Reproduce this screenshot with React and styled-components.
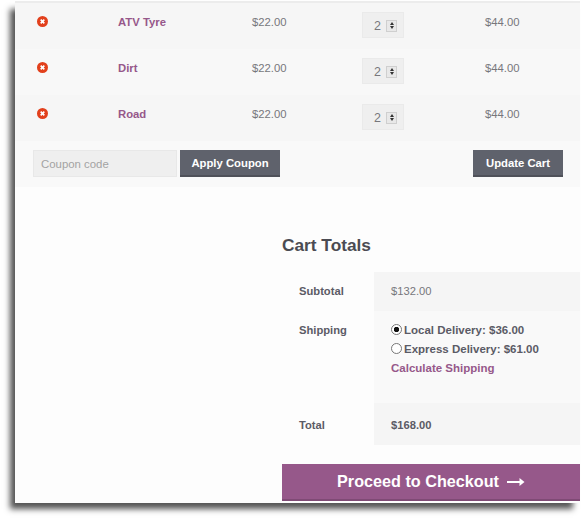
import React from 'react';
import styled, {createGlobalStyle} from 'styled-components';

const items = ['ATV Tyre', 'Dirt', 'Road'];

function App() {
    return (
        <Page>
            <GlobalStyle/>
            <Panel>
                <CartTable>
                    {items.map((name) => (
                        <CartRow key={name}>
                            <RemoveCell><RemoveIcon/></RemoveCell>
                            <NameLink>{name}</NameLink>
                            <Price>$22.00</Price>
                            <QtyCell>
                                <QtyBox>
                                    <QtyValue>2</QtyValue>
                                    <Spinner>
                                        <SpinUp/>
                                        <SpinDown/>
                                    </Spinner>
                                </QtyBox>
                            </QtyCell>
                            <Price>$44.00</Price>
                        </CartRow>
                    ))}
                </CartTable>
                <Actions>
                    <CouponInput placeholder="Coupon code"/>
                    <DarkButton>Apply Coupon</DarkButton>
                    <UpdateButton>Update Cart</UpdateButton>
                </Actions>
                <Totals>
                    <TotalsTitle>Cart Totals</TotalsTitle>
                    <TotalsTable>
                        <TotalsLabel>Subtotal</TotalsLabel>
                        <SubtotalValue>$132.00</SubtotalValue>
                        <TotalsLabel>Shipping</TotalsLabel>
                        <ShippingValue>
                            <ShipOption><Radio $checked/>Local Delivery: $36.00</ShipOption>
                            <ShipOption><Radio/>Express Delivery: $61.00</ShipOption>
                            <CalcLink>Calculate Shipping</CalcLink>
                        </ShippingValue>
                        <GrandLabel>Total</GrandLabel>
                        <GrandValue>$168.00</GrandValue>
                    </TotalsTable>
                    <CheckoutButton>
                        Proceed to Checkout
                        <svg width="18" height="10" viewBox="0 0 18 10">
                            <path d="M0 5h14" stroke="#fff" strokeWidth="2"/>
                            <path d="M12.5 1L17.5 5L12.5 9z" fill="#fff"/>
                        </svg>
                    </CheckoutButton>
                </Totals>
            </Panel>
        </Page>
    );
}

function RemoveIcon() {
    return (
        <svg width="11" height="11" viewBox="0 0 11 11">
            <circle cx="5.5" cy="5.5" r="5.5" fill="#e2401c"/>
            <path d="M3.7 3.7l3.6 3.6M7.3 3.7L3.7 7.3" stroke="#fff" strokeWidth="1.7"/>
        </svg>
    );
}

const GlobalStyle = createGlobalStyle`
  html, body {
    margin: 0;
    background: #fff;
  }
  body {
    font-family: "Liberation Sans", Arial, sans-serif;
    font-size: 11.3px;
    color: #5b5b66;
  }
`
const Page = styled.div`
  width: 581px;
  height: 518px;
  overflow: hidden;
  padding: 1px 0 0 15px;
  box-sizing: border-box;
`
const Panel = styled.div`
  width: 565px;
  height: 502px;
  background: #fdfdfd;
  border-top: 2px solid #ececec;
  box-sizing: border-box;
  box-shadow: -6px 7px 6px -1px #555;
`
const CartTable = styled.div`
  display: flex;
  flex-direction: column;
`
const CartRow = styled.div`
  display: grid;
  grid-template-columns: 103px 134px 110px 123px 1fr;
  height: 46px;
  background: #f6f6f6;
  &:nth-child(2) {
    background: #f8f8f8;
  }
`
const RemoveCell = styled.div`
  padding: 13px 0 0 22px;
  line-height: 0;
`
const NameLink = styled.a`
  padding-top: 12px;
  font-weight: bold;
  line-height: 15px;
  color: #96588a;
`
const Price = styled.div`
  padding-top: 12px;
  line-height: 15px;
  color: #77777c;
`
const QtyCell = styled.div`
  padding-top: 9px;
`
const QtyBox = styled.div`
  display: flex;
  align-items: center;
  justify-content: flex-end;
  gap: 5px;
  width: 42px;
  height: 26px;
  padding: 1px 6px 0 0;
  box-sizing: border-box;
  background: #efefef;
  border: 1px solid #eaeaea;
`
const QtyValue = styled.span`
  color: #77777c;
  font-size: 12.5px;
`
const Spinner = styled.div`
  display: flex;
  flex-direction: column;
  width: 11px;
  height: 12px;
  background: #e8e8e8;
  border: 1px solid #cfcfcf;
  box-sizing: border-box;
  align-items: center;
  justify-content: space-evenly;
`
const SpinUp = styled.span`
  border: 2.5px solid transparent;
  border-top: 0;
  border-bottom: 3px solid #333;
`
const SpinDown = styled.span`
  border: 2.5px solid transparent;
  border-bottom: 0;
  border-top: 3px solid #333;
`
const Actions = styled.div`
  display: flex;
  align-items: flex-start;
  height: 46px;
  padding: 9px 17px 0 18px;
  box-sizing: border-box;
  background: #f9f9f9;
`
const CouponInput = styled.input`
  width: 144px;
  height: 27px;
  padding: 0 7px;
  box-sizing: border-box;
  background: #efefef;
  border: 1px solid #e8e8e8;
  font: 11.4px "Liberation Sans", Arial, sans-serif;
  &::placeholder {
    color: #a3a3a3;
    opacity: 1;
  }
`
const DarkButton = styled.button`
  width: 100px;
  height: 27px;
  margin-left: 3px;
  padding: 0;
  background: #5f626c;
  border: 0;
  border-bottom: 2px solid #4f5159;
  color: #fff;
  font: bold 11.3px "Liberation Sans", Arial, sans-serif;
`
const UpdateButton = styled(DarkButton)`
  width: 90px;
  margin-left: auto;
`
const Totals = styled.div`
  padding: 47px 0 0 267px;
`
const TotalsTitle = styled.h2`
  margin: 0 0 16px;
  font-size: 17.3px;
  line-height: 22px;
  color: #4b4b52;
`
const TotalsTable = styled.div`
  display: grid;
  grid-template-columns: 92px 1fr;
  grid-template-rows: 39px 92px 42px;
`
const TotalsLabel = styled.div`
  padding: 13px 0 0 17px;
  font-size: 11.2px;
  font-weight: bold;
  line-height: 13px;
`
const SubtotalValue = styled.div`
  padding: 13px 0 0 17px;
  font-size: 11.2px;
  line-height: 13px;
  color: #77777c;
  background: #f5f5f5;
`
const ShippingValue = styled.div`
  padding: 9px 0 0 17px;
  background: #f9f9f9;
  font-size: 11.5px;
  font-weight: bold;
`
const ShipOption = styled.div`
  display: flex;
  align-items: center;
  gap: 2px;
  height: 19px;
`
const Radio = styled.span`
  width: 9px;
  height: 9px;
  border: 1px solid #777;
  border-radius: 50%;
  background: ${props => props.$checked ? 'radial-gradient(circle, #111 0 2.4px, #fff 3px)' : '#fff'};
`
const CalcLink = styled.a`
  display: block;
  line-height: 21px;
  color: #96588a;
`
const GrandLabel = styled(TotalsLabel)`
  padding-top: 16px;
`
const GrandValue = styled(GrandLabel)`
  background: #f5f5f5;
`
const CheckoutButton = styled.button`
  display: flex;
  align-items: center;
  justify-content: center;
  gap: 8px;
  width: 298px;
  height: 37px;
  margin-top: 19px;
  padding: 0;
  background: #96588a;
  border: 0;
  border-bottom: 2px solid #7f4a75;
  color: #fff;
  font: bold 16.2px "Liberation Sans", Arial, sans-serif;
`

export default App;
